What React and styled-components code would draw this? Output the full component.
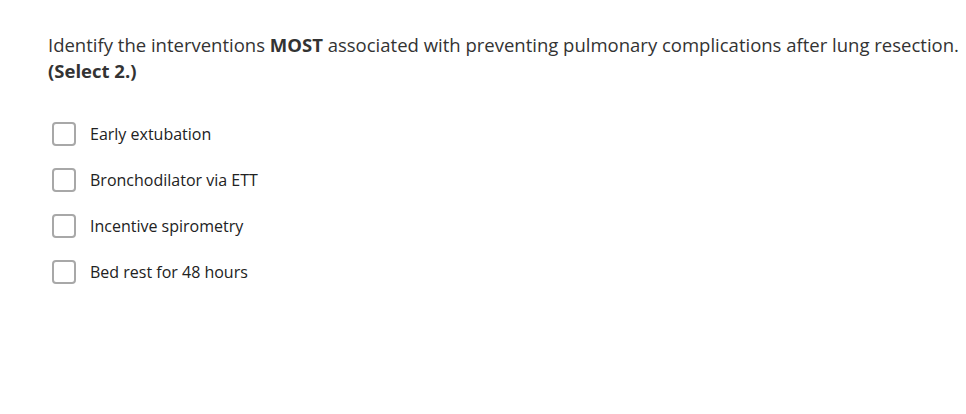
import React from 'react';
import styled, { createGlobalStyle } from 'styled-components';

const GlobalStyle = createGlobalStyle`
  body {
    margin: 0;
    background: #fff;
    font-family: "Open Sans", "Noto Sans", sans-serif;
  }
`;

const Container = styled.div`
  padding: 32px 0 0 48px;
  color: #333;
`;

const Question = styled.p`
  margin: 0;
  font-size: 18.5px;
  line-height: 26px;
  white-space: nowrap;
  & strong {
    font-weight: 700;
  }
`;

const OptionList = styled.div`
  display: flex;
  flex-direction: column;
  gap: 22px;
  margin-top: 38px;
  padding-left: 4px;
`;

const Option = styled.label`
  display: flex;
  align-items: center;
  gap: 14px;
  font-size: 16px;
  color: #222;
  cursor: pointer;
`;

const Box = styled.span`
  width: 20px;
  height: 20px;
  border: 2px solid #a8a8a8;
  border-radius: 4px;
  flex-shrink: 0;
`;

const options = [
  'Early extubation',
  'Bronchodilator via ETT',
  'Incentive spirometry',
  'Bed rest for 48 hours',
];

export default function App() {
  return (
    <Container>
      <GlobalStyle />
      <Question>
        Identify the interventions <strong>MOST</strong> associated with preventing pulmonary complications after lung resection.
        <br />
        <strong>(Select 2.)</strong>
      </Question>
      <OptionList>
        {options.map((o) => (
          <Option key={o}>
            <Box />
            {o}
          </Option>
        ))}
      </OptionList>
    </Container>
  );
}
